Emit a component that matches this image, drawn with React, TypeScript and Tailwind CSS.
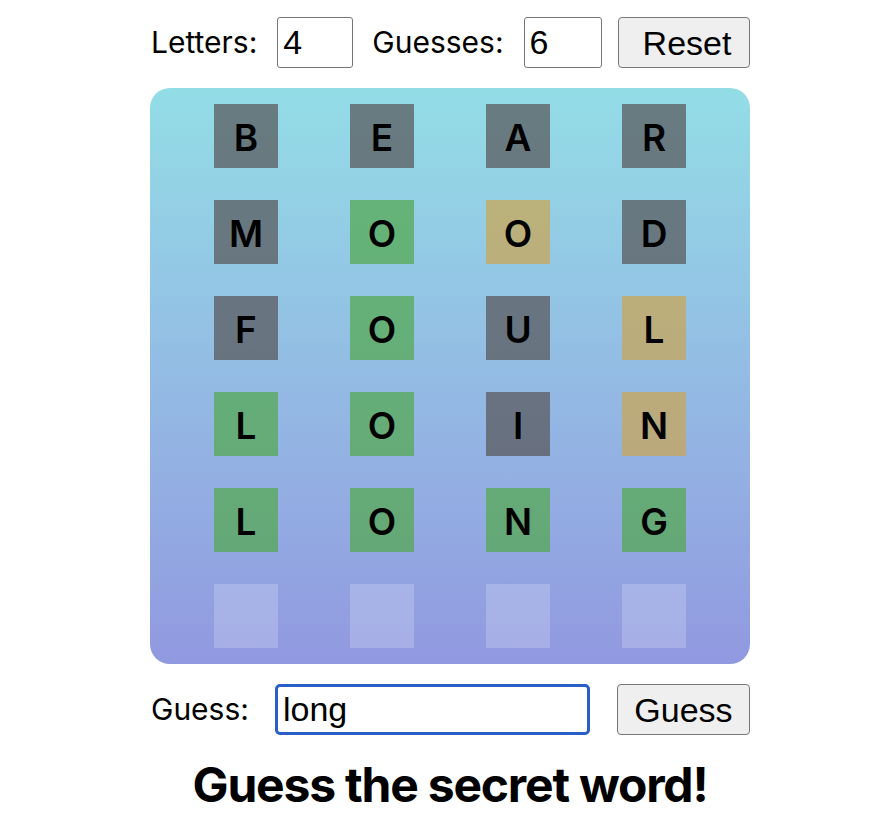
import React from "react";

type S = "x" | "g" | "y" | "e";
const rows: { l: string; s: S }[][] = [
  [{ l: "B", s: "x" }, { l: "E", s: "x" }, { l: "A", s: "x" }, { l: "R", s: "x" }],
  [{ l: "M", s: "x" }, { l: "O", s: "g" }, { l: "O", s: "y" }, { l: "D", s: "x" }],
  [{ l: "F", s: "x" }, { l: "O", s: "g" }, { l: "U", s: "x" }, { l: "L", s: "y" }],
  [{ l: "L", s: "g" }, { l: "O", s: "g" }, { l: "I", s: "x" }, { l: "N", s: "y" }],
  [{ l: "L", s: "g" }, { l: "O", s: "g" }, { l: "N", s: "g" }, { l: "G", s: "g" }],
  [{ l: "", s: "e" }, { l: "", s: "e" }, { l: "", s: "e" }, { l: "", s: "e" }],
];

const bgFor: Record<S, string> = {
  x: "bg-[rgba(88,88,90,0.73)]",
  g: "bg-[rgba(83,168,80,0.73)]",
  y: "bg-[rgba(202,166,84,0.73)]",
  e: "bg-white/20",
};

function Tile({ l, s }: { l: string; s: S }) {
  return (
    <div
      className={`w-[64px] h-[64px] flex items-center justify-center pt-[3px] text-[37px] font-semibold text-black font-['Inter',sans-serif] ${bgFor[s]}`}
    >
      {l}
    </div>
  );
}

export default function App() {
  return (
    <div className="flex flex-col items-center pt-[17px] pl-[16px] bg-white min-h-[820px] font-['Inter','Noto_Sans',sans-serif]">
      <div className="flex items-center w-[600px] h-[51px]">
        <span className="text-[30px] text-black ml-[1px]">Letters:</span>
        <input
          readOnly
          value="4"
          className="ml-[20px] w-[76px] h-[51px] border border-[#767676] rounded-[3px] px-[5px] text-[34px] text-black bg-white outline-none font-['Liberation_Sans',Arial,sans-serif]"
        />
        <span className="ml-[19px] text-[30px] text-black">Guesses:</span>
        <input
          readOnly
          value="6"
          className="ml-[20px] w-[78px] h-[51px] border border-[#767676] rounded-[3px] px-[5px] text-[34px] text-black bg-white outline-none font-['Liberation_Sans',Arial,sans-serif]"
        />
        <button className="ml-auto w-[132px] h-[51px] border border-[#767676] rounded-[4px] bg-[#efefef] pl-[6px] text-[34px] text-black font-['Liberation_Sans',Arial,sans-serif]">
          Reset
        </button>
      </div>

      <div className="mt-[20px] w-[600px] rounded-[20px] bg-gradient-to-b from-[#93dde6] to-[#9199e0] px-[64px] py-[16px] flex flex-col gap-[32px]">
        {rows.map((r, i) => (
          <div key={i} className="flex justify-between">
            {r.map((t, j) => (
              <Tile key={j} l={t.l} s={t.s} />
            ))}
          </div>
        ))}
      </div>

      <div className="mt-[20px] flex items-center w-[600px] h-[51px]">
        <span className="ml-[1px] text-[30px] text-black">Guess:</span>
        <input
          readOnly
          value="long"
          className="ml-[26px] w-[315px] h-[51px] border-[3px] border-[#2b5fc8] rounded-[5px] px-[5px] text-[34px] text-black bg-white outline-none font-['Liberation_Sans',Arial,sans-serif]"
        />
        <button className="ml-auto w-[133px] h-[51px] border border-[#767676] rounded-[4px] bg-[#efefef] text-[34px] text-black font-['Liberation_Sans',Arial,sans-serif]">
          Guess
        </button>
      </div>

      <h1 className="mt-[26px] text-[48px] leading-[48px] font-bold tracking-[-0.025em] text-black">
        Guess the secret word!
      </h1>
    </div>
  );
}
